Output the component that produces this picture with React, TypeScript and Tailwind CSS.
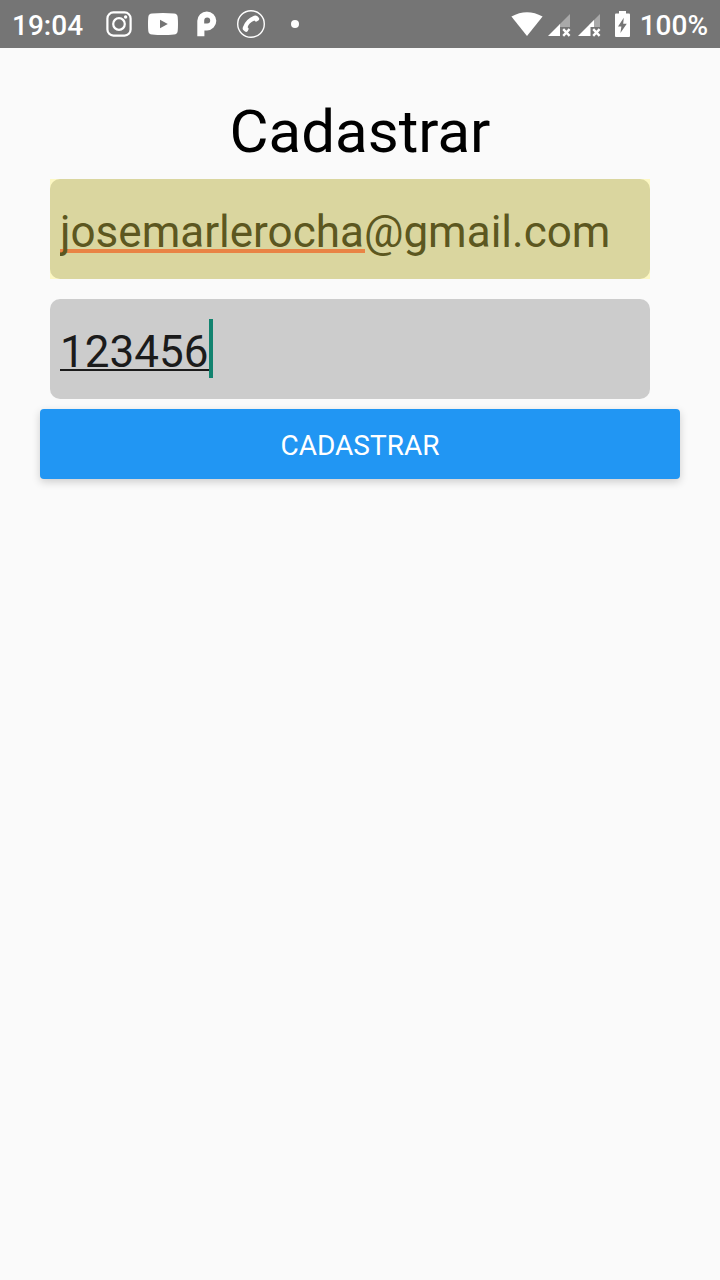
function InstagramIcon() {
  return (
    <svg className="h-[26px] w-[26px]" viewBox="0 0 26 26" fill="none" stroke="white" strokeWidth="2.2" aria-hidden="true">
      <rect x="1.4" y="1.4" width="23.2" height="23.2" rx="6" />
      <circle cx="13" cy="13" r="5.8" />
      <circle cx="19.6" cy="6" r="1.7" fill="white" stroke="none" />
    </svg>
  );
}

function YoutubeIcon() {
  return (
    <svg className="h-[22px] w-[30px]" viewBox="0 0 30 22" aria-hidden="true">
      <path
        fill="white"
        fillRule="evenodd"
        d="M4 .5Q15-.5 26 .5Q29.4.8 29.7 4Q30.3 11 29.7 18Q29.4 21.2 26 21.5Q15 22.5 4 21.5Q.6 21.2.3 18Q-.3 11 .3 4Q.6.8 4 .5ZM12 6.8V15.2L19.8 11Z"
      />
    </svg>
  );
}

function PIcon() {
  return (
    <svg className="h-[26px] w-5" viewBox="0 0 20 26" aria-hidden="true">
      <path
        fill="white"
        fillRule="evenodd"
        d="M.3 25.2V9.8A9.5 9.5 0 1 1 10 19.4H7.4V25.2ZM10.2 6.4A3.1 3.1 0 0 0 7.2 9.4V12.4H10.2A3 3 0 0 0 10.2 6.4Z"
      />
    </svg>
  );
}

function CallIcon() {
  return (
    <svg className="h-7 w-7" viewBox="0 0 28 28" fill="none" aria-hidden="true">
      <circle cx="14" cy="14" r="13.3" stroke="white" strokeWidth="1.4" />
      <path
        fill="white"
        d="M17 5.8Q18.8 4.8 20.5 6.2L22 8Q22.8 9.6 21 10.8L19.6 11.6Q18.2 12 17.4 10.6Q12 13 10.6 17.2Q12 18 11.5 19.4L10.6 21.2Q9.4 22.6 8 21.6L6.2 20Q5.2 18.6 6 17Q8.6 9.2 17 5.8Z"
      />
    </svg>
  );
}

function WifiIcon() {
  return (
    <svg className="h-6 w-8" viewBox="0 0 32 24" aria-hidden="true">
      <path fill="white" d="M16 24L0.4 4.6Q16-4.2 31.6 4.6Z" />
    </svg>
  );
}

function SignalIcon({ level }: { level: number }) {
  return (
    <svg className="h-6 w-6" viewBox="0 0 24 24" aria-hidden="true">
      <path fill="#a9a9a9" d="M23 1V14H12V12Z" />
      <path fill="white" d={level > 1 ? "M1 23L17 7V14H13.5V23Z" : "M1 23L13 11V23Z"} />
      <path stroke="white" strokeWidth="2.4" d="M16.2 16.2L22.6 22.8M22.6 16.2L16.2 22.8" />
    </svg>
  );
}

function BatteryIcon() {
  return (
    <svg className="h-[26px] w-[15px]" viewBox="0 0 15 26" aria-hidden="true">
      <path
        fill="white"
        fillRule="evenodd"
        d="M4 0H11V2.6H14Q15 2.6 15 3.8V25Q15 26 14 26H1Q0 26 0 25V3.8Q0 2.6 1 2.6H4ZM8.8 6.8L3 15.4H6.4L5.4 22L11.8 12.8H8.2Z"
      />
    </svg>
  );
}

export default function App() {
  return (
    <div className="min-h-screen bg-[#fafafa] font-[Roboto,sans-serif]">
      <header className="flex h-12 items-center justify-between bg-[#757575] px-3 text-[28px] leading-none font-medium text-white">
        <div className="flex items-center">
          <time className="pt-1">19:04</time>
          <div className="ml-[23px] flex items-center gap-4">
            <InstagramIcon />
            <YoutubeIcon />
            <div className="flex items-center gap-5 pl-[3px]">
              <PIcon />
              <CallIcon />
            </div>
          </div>
          <span className="ml-[26px] h-2 w-2 rounded-full bg-white" />
        </div>
        <div className="flex items-center">
          <WifiIcon />
          <div className="ml-1 flex gap-1.5 pt-0.5">
            <SignalIcon level={1} />
            <SignalIcon level={2} />
          </div>
          <div className="ml-3.5">
            <BatteryIcon />
          </div>
          <span className="ml-2.5 pt-1">100%</span>
        </div>
      </header>

      <main className="px-10 pt-[49px]">
        <h1 className="text-center text-[60px] leading-[70px] text-black">Cadastrar</h1>
        <form className="flex flex-col" onSubmit={(event) => event.preventDefault()}>
          <div className="mt-3 mr-[30px] ml-2.5 bg-[#fdf8c4]">
            <div className="relative rounded-[10px] bg-[#dad69f]">
              <span className="pointer-events-none absolute top-[70px] left-2.5 h-1 w-[305px] bg-[#e98445]" />
              <input
                type="email"
                aria-label="E-mail"
                defaultValue="josemarlerocha@gmail.com"
                spellCheck={false}
                className="relative block h-[100px] w-full bg-transparent px-2.5 pt-1.5 text-[44px] text-[#5c5720] outline-none"
              />
            </div>
          </div>
          <div className="relative mt-5 mr-[30px] ml-2.5">
            <input
              type="text"
              aria-label="Senha"
              defaultValue="123456"
              className="block h-[100px] w-full rounded-[10px] bg-[#cccccc] px-2.5 pt-1.5 text-[44px] text-[#1b1b1b] outline-none"
            />
            <span className="pointer-events-none absolute top-[70px] left-2.5 h-0.5 w-[150px] bg-[#1b1b1b]" />
            <span className="pointer-events-none absolute top-5 left-[159px] h-[59px] w-1 bg-[#12836f]" />
          </div>
          <button
            type="submit"
            className="mt-2.5 h-[70px] w-full rounded-[4px] bg-[#2196f3] pt-1 text-[28px] text-white uppercase shadow-[0_3px_8px_rgba(0,0,0,0.18)]"
          >
            Cadastrar
          </button>
        </form>
      </main>
    </div>
  );
}
